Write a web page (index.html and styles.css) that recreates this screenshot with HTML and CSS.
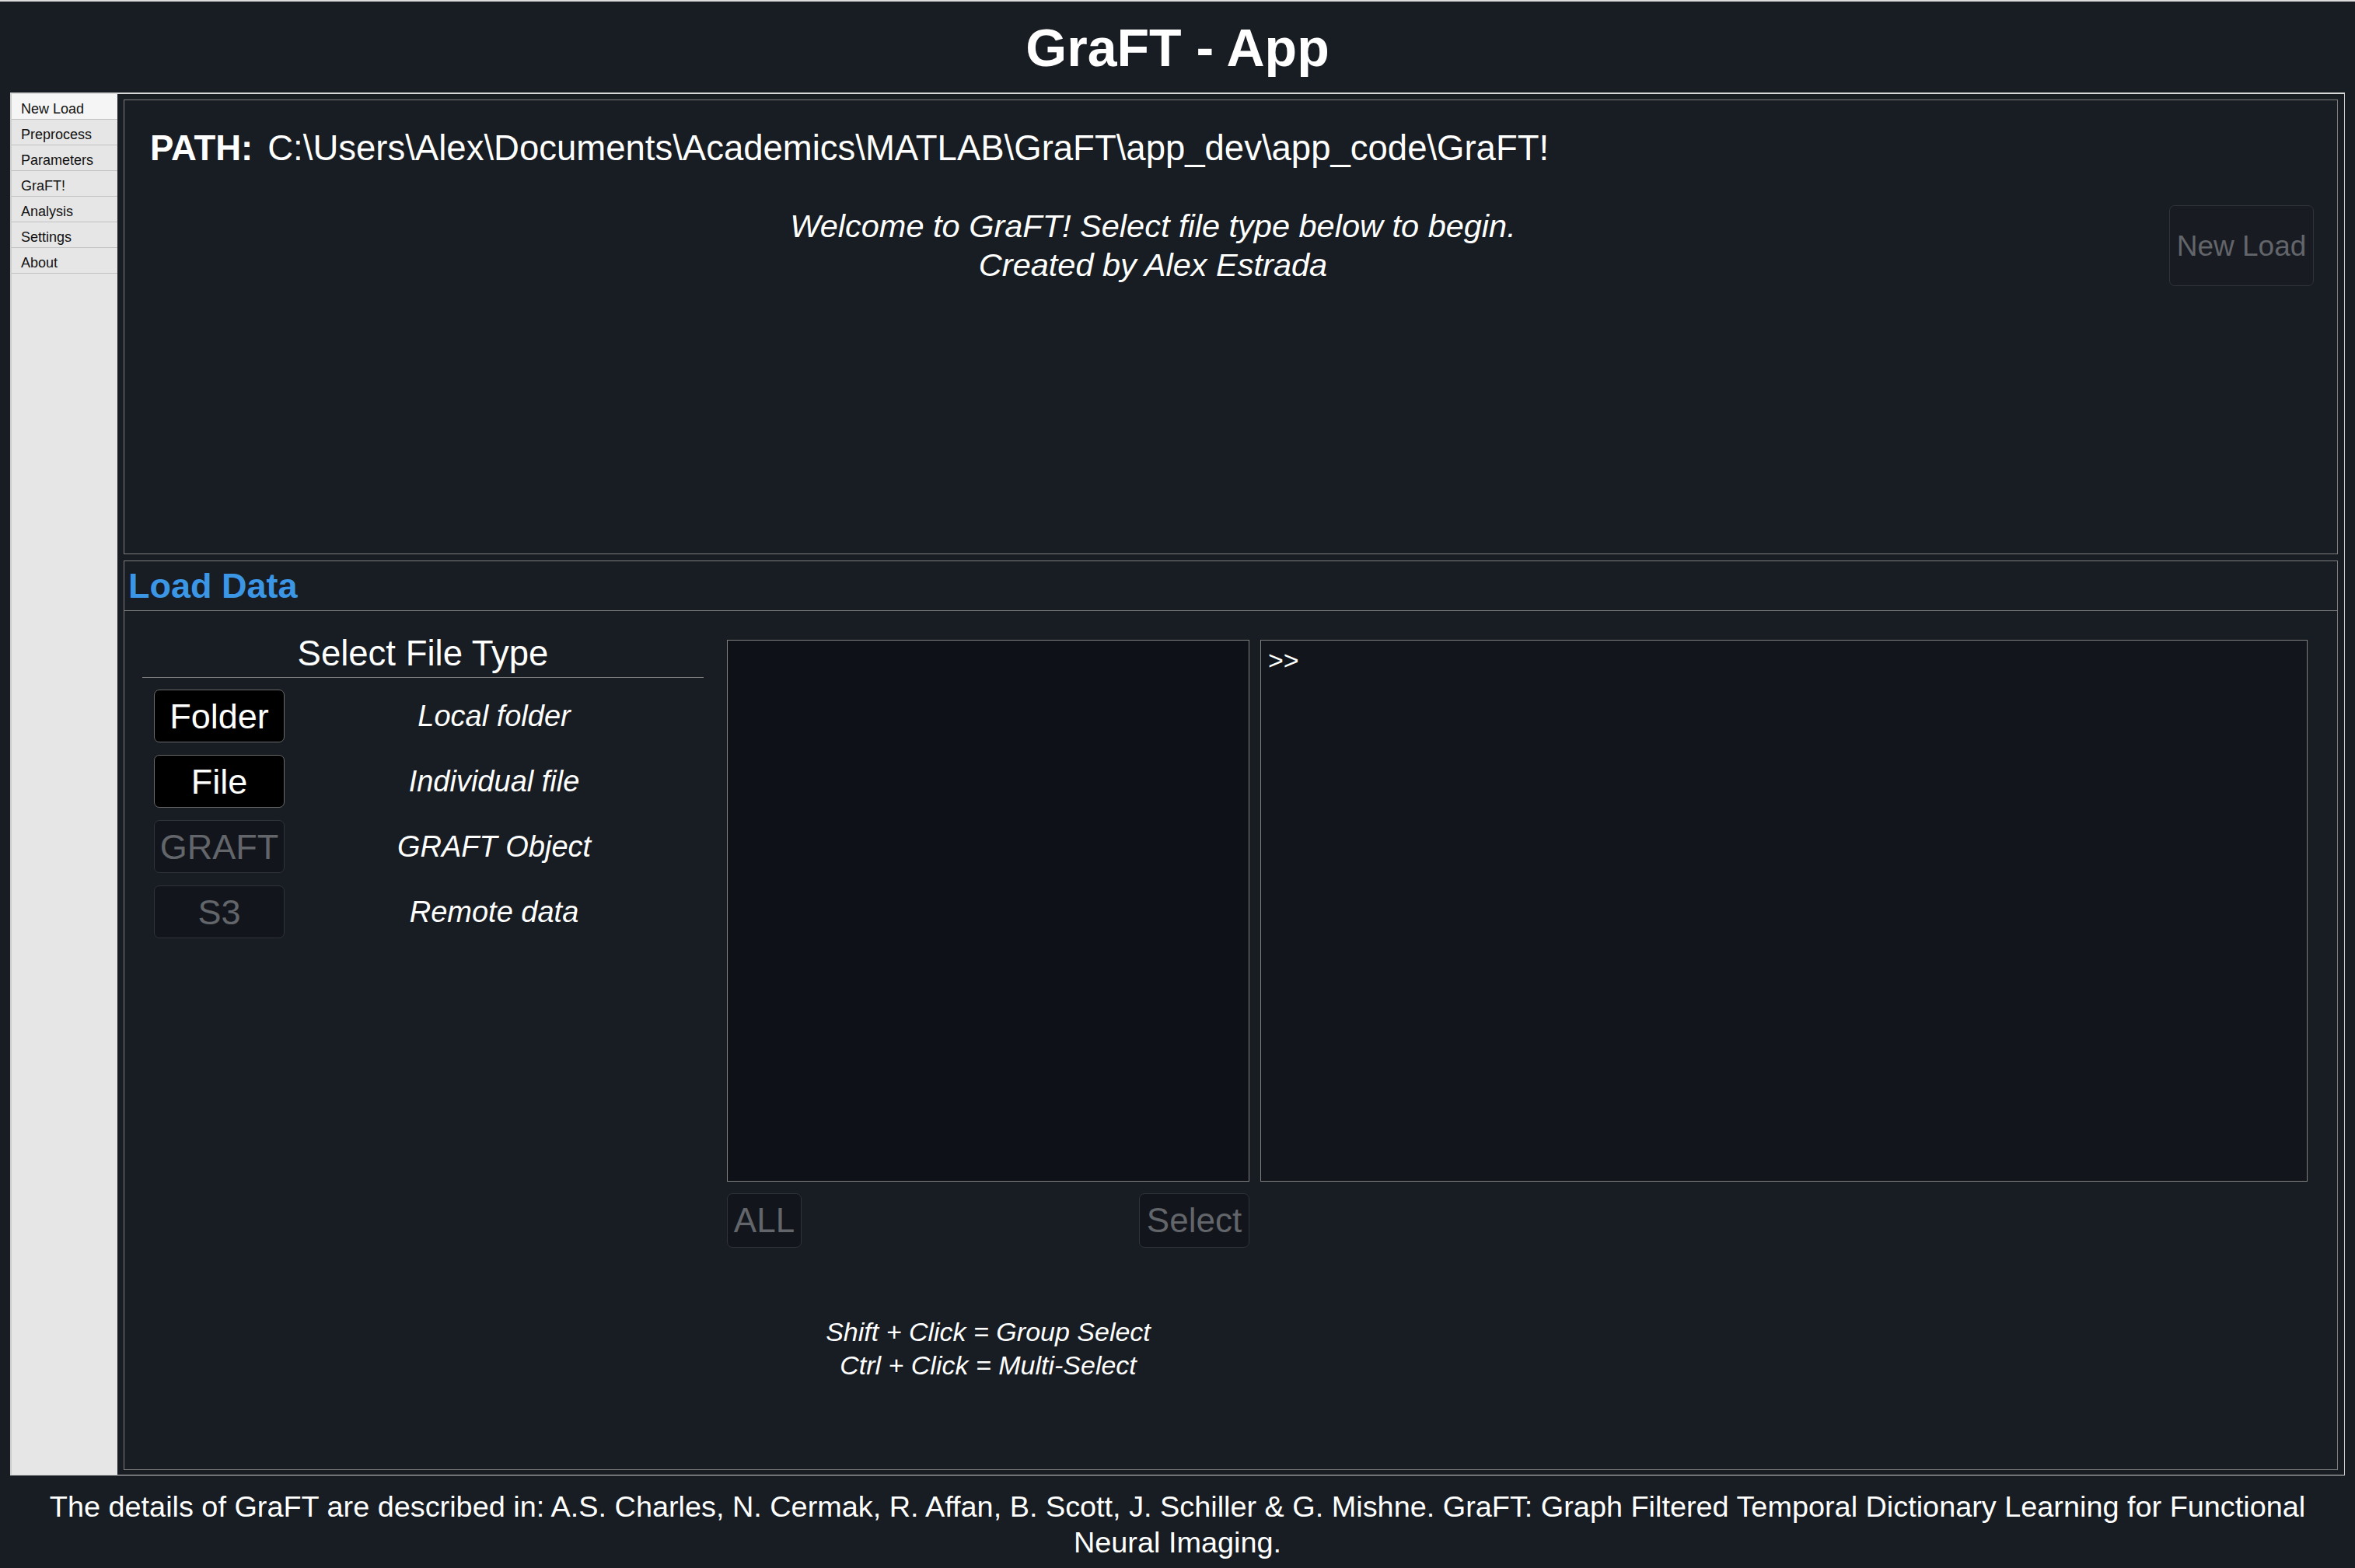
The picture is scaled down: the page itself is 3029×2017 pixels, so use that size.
FILE: index.html
```html
<!DOCTYPE html>
<html lang="en">
<head>
<meta charset="utf-8">
<title>GraFT - App</title>
<link rel="stylesheet" href="styles.css">
</head>
<body>
<header class="app-header">
  <h1 class="app-title">GraFT - App</h1>
</header>
<div class="app-frame">
  <nav class="sidebar">
    <div class="nav-item nav-item-active">New Load</div>
    <div class="nav-item">Preprocess</div>
    <div class="nav-item">Parameters</div>
    <div class="nav-item">GraFT!</div>
    <div class="nav-item">Analysis</div>
    <div class="nav-item">Settings</div>
    <div class="nav-item">About</div>
  </nav>
  <main class="main">
    <section class="info-box">
      <div class="path-row">
        <span class="path-label">PATH:</span>
        <span class="path-value">C:\Users\Alex\Documents\Academics\MATLAB\GraFT\app_dev\app_code\GraFT!</span>
      </div>
      <div class="welcome-row">
        <p class="welcome-text">Welcome to GraFT! Select file type below to begin.<br>Created by Alex Estrada</p>
        <button class="btn btn-disabled btn-newload">New Load</button>
      </div>
    </section>
    <section class="load-panel">
      <div class="load-header">Load Data</div>
      <div class="load-body">
        <div class="filetype-col">
          <div class="filetype-heading">Select File Type</div>
          <div class="filetype-list">
            <div class="filetype-row">
              <button class="btn btn-active btn-type">Folder</button>
              <span class="filetype-label">Local folder</span>
            </div>
            <div class="filetype-row">
              <button class="btn btn-active btn-type">File</button>
              <span class="filetype-label">Individual file</span>
            </div>
            <div class="filetype-row">
              <button class="btn btn-disabled btn-type">GRAFT</button>
              <span class="filetype-label">GRAFT Object</span>
            </div>
            <div class="filetype-row">
              <button class="btn btn-disabled btn-type">S3</button>
              <span class="filetype-label">Remote data</span>
            </div>
          </div>
        </div>
        <div class="list-col">
          <div class="listbox"></div>
          <div class="list-actions">
            <button class="btn btn-disabled btn-all">ALL</button>
            <button class="btn btn-disabled btn-select">Select</button>
          </div>
          <p class="help-text">Shift + Click = Group Select<br>Ctrl + Click = Multi-Select</p>
        </div>
        <div class="console">&gt;&gt;</div>
      </div>
    </section>
  </main>
</div>
<footer class="app-footer">
  The details of GraFT are described in: A.S. Charles, N. Cermak, R. Affan, B. Scott, J. Schiller &amp; G. Mishne. GraFT: Graph Filtered Temporal Dictionary Learning for Functional Neural Imaging.
</footer>
</body>
</html>
```
FILE: styles.css
```css
* { box-sizing: border-box; }

html, body {
  margin: 0;
  padding: 0;
}

body {
  background: #181c23;
  color: #ffffff;
  font-family: "Liberation Sans", Arial, sans-serif;
  border-top: 2px solid #dcdcdc;
  width: 3029px;
  min-height: 2017px;
}

.app-header {
  height: 117px;
  display: flex;
  align-items: center;
  justify-content: center;
}

.app-title {
  margin: 0;
  font-size: 68px;
  font-weight: bold;
  line-height: 1;
  color: #ffffff;
}

.app-frame {
  display: flex;
  margin: 0 13px 0 13px;
  border-top: 2px solid #d8d8d8;
  border-left: 2px solid #cdcdcd;
  border-right: 1px solid #cdcdcd;
  border-bottom: 1px solid #cdcdcd;
  height: 1779px;
}

.sidebar {
  width: 136px;
  flex: none;
  background: #e6e6e6;
}

.nav-item {
  height: 33px;
  line-height: 32px;
  padding: 3px 0 0 12px;
  font-size: 18px;
  color: #111111;
  border-bottom: 1px solid #c2c2c2;
}

.nav-item-active {
  background: #f5f5f5;
}

.main {
  flex: 1;
  padding: 7px 8px 6px 8px;
  display: flex;
  flex-direction: column;
  gap: 8px;
}

.info-box {
  height: 585px;
  flex: none;
  border: 1px solid #7d7d7d;
  padding: 38px 30px 0 33px;
}

.path-row {
  display: flex;
  gap: 19px;
  font-size: 45.5px;
  line-height: 48px;
}

.path-label {
  font-weight: bold;
}

.welcome-row {
  display: flex;
  align-items: flex-start;
  gap: 17px;
  margin-top: 49px;
}

.welcome-text {
  flex: 1;
  margin: 2px 0 0 0;
  text-align: center;
  font-style: italic;
  font-size: 41.5px;
  line-height: 50px;
}

.btn {
  font-family: "Liberation Sans", Arial, sans-serif;
  border-radius: 7px;
  padding: 0;
  line-height: 1;
  display: flex;
  align-items: center;
  justify-content: center;
}

.btn-active {
  background: #000000;
  border: 1px solid #6a6a6a;
  color: #ffffff;
}

.btn-disabled {
  background: #12151b;
  border: 1px solid #30333a;
  color: #62656a;
}

.btn-newload {
  width: 186px;
  height: 104px;
  font-size: 37px;
  background: #181b22;
}

.load-panel {
  flex: 1;
  border: 1px solid #7d7d7d;
  display: flex;
  flex-direction: column;
}

.load-header {
  height: 64px;
  flex: none;
  border-bottom: 1px solid #7d7d7d;
  padding-left: 5px;
  font-size: 45px;
  font-weight: bold;
  color: #3b97e5;
  line-height: 63px;
}

.load-body {
  display: flex;
  align-items: flex-start;
  padding: 30px 38px 0 23px;
}

.filetype-col {
  width: 722px;
  flex: none;
}

.filetype-heading {
  text-align: center;
  font-size: 45.5px;
  line-height: 50px;
  padding-bottom: 5px;
  border-bottom: 1px solid #7a7a7a;
}

.filetype-list {
  display: flex;
  flex-direction: column;
  gap: 16px;
  padding: 15px 0 0 15px;
}

.filetype-row {
  display: flex;
  align-items: center;
}

.btn-type {
  width: 168px;
  height: 68px;
  font-size: 45px;
}

.filetype-label {
  flex: 1;
  text-align: center;
  font-style: italic;
  font-size: 38px;
}

.list-col {
  width: 672px;
  flex: none;
  margin: 7px 0 0 30px;
}

.listbox {
  height: 697px;
  background: #0e1117;
  border: 1px solid #808080;
}

.list-actions {
  display: flex;
  justify-content: space-between;
  margin-top: 15px;
}

.btn-all {
  width: 96px;
  height: 70px;
  font-size: 44px;
}

.btn-select {
  width: 142px;
  height: 70px;
  font-size: 44px;
}

.help-text {
  margin: 87px 0 0 0;
  text-align: center;
  font-style: italic;
  font-size: 34px;
  line-height: 43px;
}

.console {
  flex: 1;
  margin: 7px 0 0 14px;
  height: 697px;
  background: #12151b;
  border: 1px solid #808080;
  padding: 5px 9px;
  font-size: 34px;
  line-height: 40px;
}

.app-footer {
  margin-top: 17px;
  padding: 0 40px;
  text-align: center;
  font-size: 37.85px;
  line-height: 46px;
}
```
